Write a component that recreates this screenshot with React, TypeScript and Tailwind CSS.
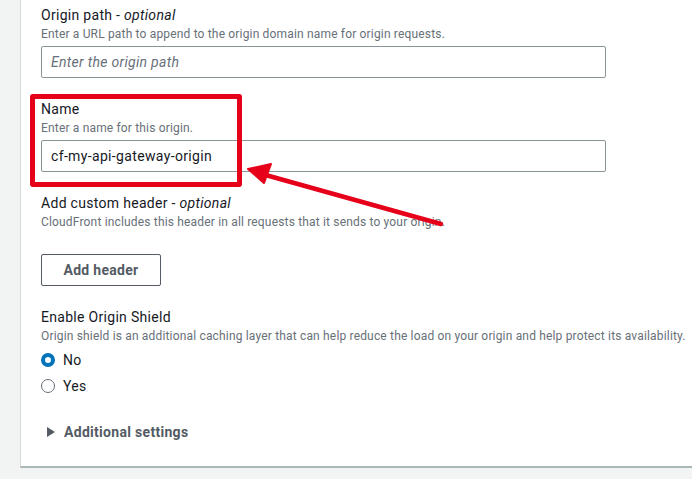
import React from "react";

function Label({ title, optional }: { title: string; optional?: boolean }) {
  return (
    <div className="text-[14px] leading-[22px] tracking-[0.3px] text-[#16191f]">
      {title}
      {optional && (
        <>
          {" - "}
          <i>optional</i>
        </>
      )}
    </div>
  );
}

function Desc({ children }: { children: React.ReactNode }) {
  return (
    <div className="text-[12px] leading-[16px] tracking-[0.17px] text-[#687078]">{children}</div>
  );
}

function Radio({ checked, label }: { checked?: boolean; label: string }) {
  return (
    <div className="flex items-center h-[22px]">
      {checked ? (
        <span className="w-[14px] h-[14px] rounded-full border-[4px] border-[#0073bb] bg-white" />
      ) : (
        <span className="w-[14px] h-[14px] rounded-full border border-[#687078] bg-white" />
      )}
      <span className="ml-[8px] text-[14px] tracking-[0.3px] text-[#16191f]">{label}</span>
    </div>
  );
}

export default function App() {
  return (
    <div
      className="relative w-[692px] h-[479px] bg-[#f2f3f3] overflow-hidden"
      style={{ fontFamily: "Roboto, 'Liberation Sans', sans-serif" }}
    >
      <div className="ml-[20px] h-[468px] bg-white border-l border-[#d5dbdb] border-b-2 border-b-[#aab7b8] pl-[20px] pt-[4px]">
        <Label title="Origin path" optional />
        <Desc>Enter a URL path to append to the origin domain name for origin requests.</Desc>
        <div className="mt-[4px] w-[565px] h-[32px] border border-[#879596] rounded-[2px] flex items-center px-[9px] text-[14px] tracking-[0.3px] italic text-[#687078]">
          Enter the origin path
        </div>

        <div className="mt-[20px]">
          <Label title="Name" />
          <Desc>Enter a name for this origin.</Desc>
          <div className="mt-[4px] w-[565px] h-[32px] border border-[#879596] rounded-[2px] flex items-center px-[9px] text-[14px] tracking-[0.35px] text-[#16191f]">
            cf-my-api-gateway-origin
          </div>
        </div>

        <div className="mt-[20px]">
          <Label title="Add custom header" optional />
          <Desc>CloudFront includes this header in all requests that it sends to your origin.</Desc>
          <button className="mt-[24px] w-[120px] h-[32px] border border-[#545b64] rounded-[2px] text-[14px] tracking-[0.3px] font-bold text-[#545b64] flex items-center justify-center">
            Add header
          </button>
        </div>

        <div className="mt-[20px]">
          <Label title="Enable Origin Shield" />
          <Desc>
            Origin shield is an additional caching layer that can help reduce the load on your origin and help protect its availability.
          </Desc>
          <div className="mt-[5px] flex flex-col gap-[4px]">
            <Radio checked label="No" />
            <Radio label="Yes" />
          </div>
        </div>

        <div className="mt-[24px] flex items-center h-[22px]">
          <svg width="8" height="10" viewBox="0 0 8 10" className="ml-[6px]">
            <path d="M0 0 L8 5 L0 10 Z" fill="#545b64" />
          </svg>
          <span className="ml-[9px] text-[14px] tracking-[0.3px] font-bold text-[#545b64]">
            Additional settings
          </span>
        </div>
      </div>

      <div className="absolute left-[30px] top-[94px] w-[212px] h-[93px] border-[5px] border-[#e6001a] rounded-[3px]" />

      <svg className="absolute left-0 top-0" width="692" height="479" viewBox="0 0 692 479">
        <line x1="441" y1="224" x2="262" y2="174" stroke="#e6001a" strokeWidth="4.5" strokeLinecap="round" />
        <path d="M248 169 L271 164 L264 183 Z" fill="#e6001a" stroke="#e6001a" strokeWidth="2" strokeLinejoin="round" />
      </svg>
    </div>
  );
}
